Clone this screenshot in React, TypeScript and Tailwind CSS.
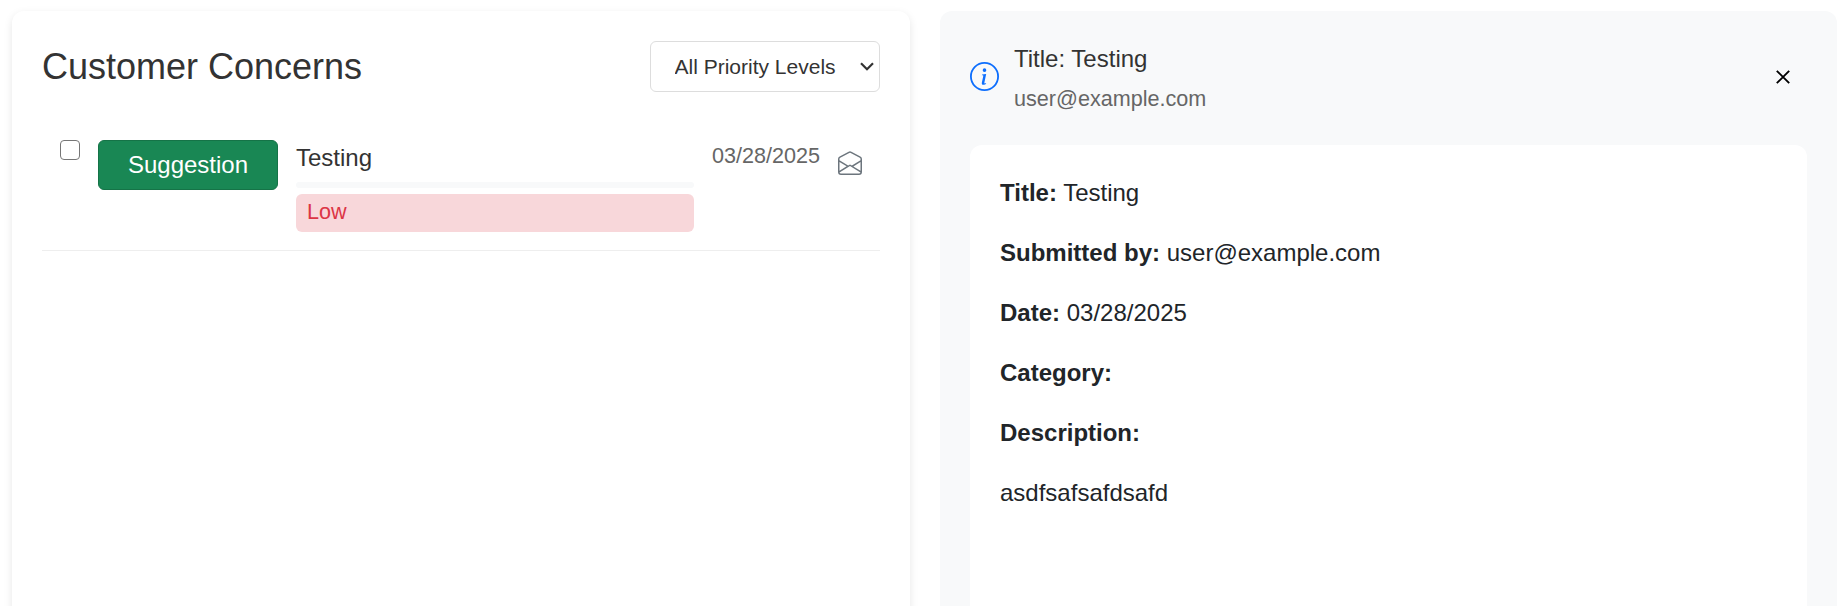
import { useState } from "react";
import { BsEnvelopeOpen, BsInfoCircle } from "react-icons/bs";

const concern = {
  title: "Testing",
  email: "user@example.com",
  date: "03/28/2025",
  type: "Suggestion",
  priority: "Low",
  category: "",
  description: "asdfsafsafdsafd",
};

function PrioritySelect() {
  return (
    <div className="relative h-[51px] w-[230px]">
      <select className="h-full w-full appearance-none rounded-md border border-[#dddddd] bg-white pl-[23.5px] text-[21px] text-[#333333]">
        <option>All Priority Levels</option>
        <option>High</option>
        <option>Medium</option>
        <option>Low</option>
      </select>
      <svg
        className="pointer-events-none absolute top-[21px] right-[6px] h-[9px] w-[14px]"
        viewBox="0 0 14 9"
        fill="none"
        stroke="#333333"
        strokeWidth="2.2"
      >
        <path d="M1 1.2 7 7.2 13 1.2" />
      </svg>
    </div>
  );
}

function ConcernRow() {
  const [checked, setChecked] = useState(false);
  return (
    <div className="flex h-[141px] items-start border-b border-[#eeeeee] pt-[30px] pl-[18px]">
      <input
        type="checkbox"
        checked={checked}
        onChange={() => setChecked(!checked)}
        className="h-5 w-5 shrink-0 appearance-none rounded-[4px] border-[1.5px] border-[#767676] bg-white checked:bg-[#0d6efd]"
      />
      <button className="ml-[18px] h-[50px] w-[180px] shrink-0 rounded-[6px] border border-[#157347] bg-[#198754] text-[24px] text-white">
        {concern.type}
      </button>
      <div className="ml-[18px] flex min-w-0 flex-1 flex-col">
        <div className="h-9 text-[24px] leading-9 text-[#333333]">{concern.title}</div>
        <div className="mt-[6px] h-[6px] rounded-[6px] bg-[#f8f9fa]" />
        <div className="mt-[6px] h-[38px] rounded-[6px] bg-[#f8d7da] px-[11px] text-[21.6px] leading-[36px] text-[#dc3545]">
          {concern.priority}
        </div>
      </div>
      <div className="ml-[18px] text-[21.6px] leading-8 text-[#666666]">{concern.date}</div>
      <BsEnvelopeOpen className="mt-[11px] mr-[18px] ml-[18px] h-6 w-6 shrink-0 text-[#6c757d]" />
    </div>
  );
}

function Field({ label, value }: { label: string; value: string }) {
  return (
    <p>
      <strong className="font-bold">{label}:</strong> {value}
    </p>
  );
}

export default function App() {
  return (
    <div className="flex h-[606px] gap-[30px] overflow-hidden bg-white pt-[11px] pr-[10px] pl-[12px] font-['Liberation_Sans',Arial,sans-serif]">
      <section className="h-[700px] w-[898px] shrink-0 rounded-xl bg-white px-[30px] pt-[30px] shadow-[0_3px_9px_rgba(0,0,0,0.1)]">
        <header className="flex items-center justify-between">
          <h1 className="text-[36px] leading-[43px] text-[#333333]">Customer Concerns</h1>
          <PrioritySelect />
        </header>
        <div className="pt-[18px]">
          <ConcernRow />
        </div>
      </section>
      <section className="h-[700px] w-[897px] shrink-0 rounded-xl bg-[#f8f9fa] px-[30px] pt-[30px]">
        <header className="flex h-[74px] items-center">
          <BsInfoCircle className="mb-[4px] h-[29px] w-[29px] text-[#0d6efd]" />
          <div className="ml-[15px] flex-1">
            <div className="text-[24px] leading-9 text-[#333333]">Title: {concern.title}</div>
            <div className="mt-[6px] text-[21.6px] leading-8 text-[#666666]">{concern.email}</div>
          </div>
          <button aria-label="Close" className="mr-[17px] mb-[2px]">
            <svg className="h-[14px] w-[14px]" viewBox="0 0 14 14" stroke="#000000" strokeWidth="1.9">
              <path d="M0.8 0.8 13.2 13.2 M13.2 0.8 0.8 13.2" />
            </svg>
          </button>
        </header>
        <article className="mt-[30px] flex h-[600px] flex-col gap-6 rounded-xl bg-white p-[30px] text-[24px] leading-9 text-[#212529]">
          <Field label="Title" value={concern.title} />
          <Field label="Submitted by" value={concern.email} />
          <Field label="Date" value={concern.date} />
          <Field label="Category" value={concern.category} />
          <Field label="Description" value="" />
          <p>{concern.description}</p>
        </article>
      </section>
    </div>
  );
}
